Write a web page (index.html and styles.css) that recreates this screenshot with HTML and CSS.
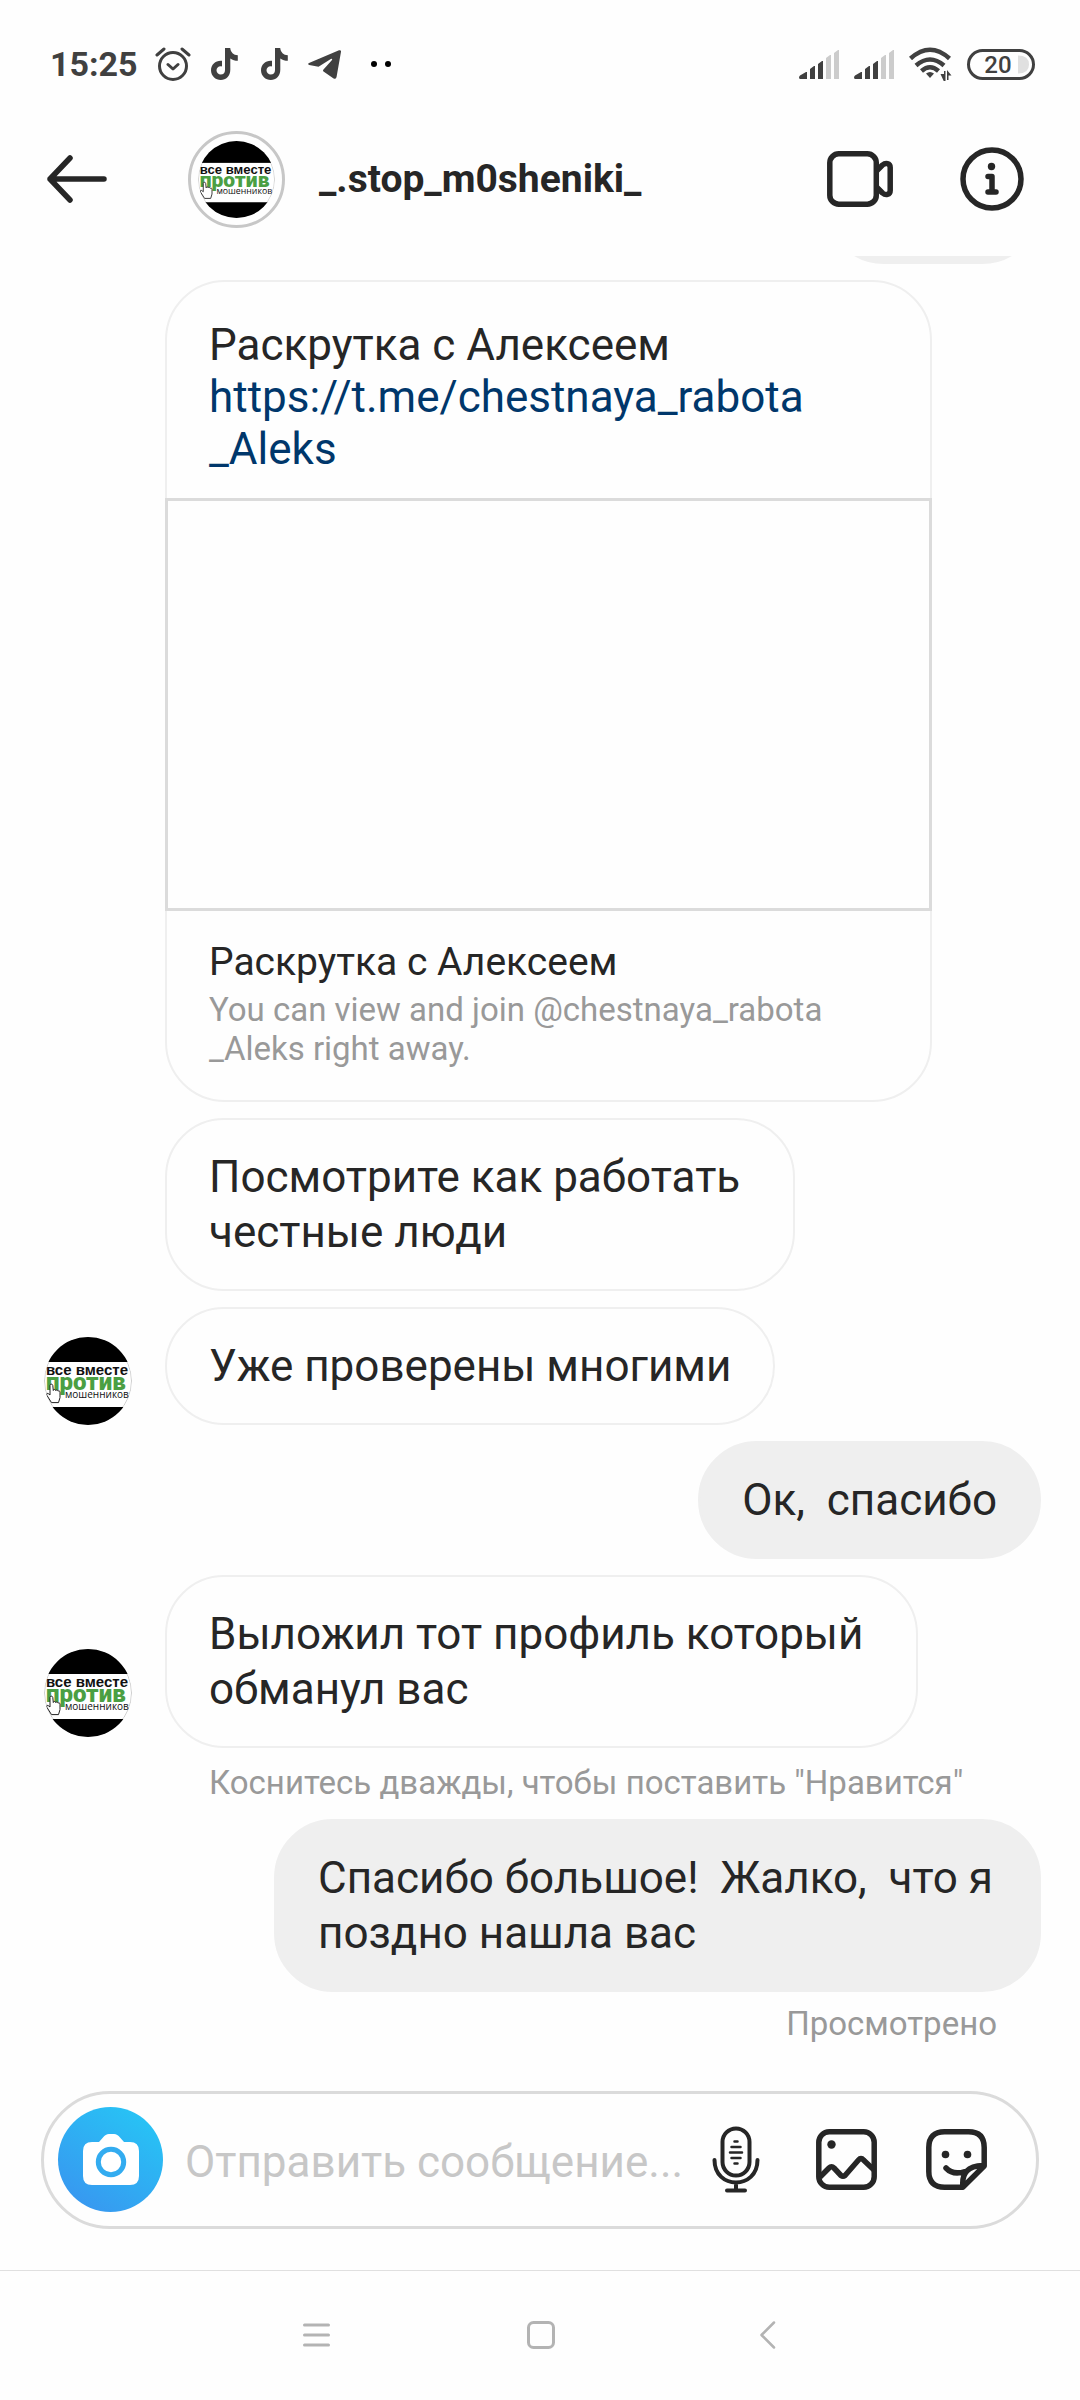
FILE: index.html
```html
<!DOCTYPE html>
<html lang="ru">
<head>
<meta charset="utf-8">
<meta name="viewport" content="width=device-width, initial-scale=1">
<title>_.stop_m0sheniki_</title>
<link rel="stylesheet" href="styles.css">
</head>
<body>
<svg class="sprite" aria-hidden="true">
  <defs>
    <clipPath id="round"><circle cx="44" cy="44" r="44"/></clipPath>
    <symbol id="avatar" viewBox="0 0 88 88">
      <g clip-path="url(#round)">
        <rect width="88" height="88" fill="#fff"/>
        <rect width="88" height="25" fill="#000"/>
        <rect y="70" width="88" height="18" fill="#000"/>
        <circle cx="44" cy="44" r="43.500" fill="none" stroke="#000" stroke-opacity=".2"/>
        <text class="logo-top" x="2" y="38">все вместе</text>
        <text class="logo-mid" x="2" y="53">против</text>
        <text class="logo-low" x="21" y="61">мошенников</text>
        <path d="M6 48.500c0-1.800 2.600-1.800 2.800 0l.5 5c.2-1.500 2.200-1.300 2.400.1.300-1 2.100-.8 2.300.6.500-.8 2-.4 2 .9v5.500l-1.500 5H7.500L3 58.500c-1-2 .6-2.800 1.800-1.500L6 58z" fill="#fff" stroke="#222" stroke-width="1"/>
      </g>
    </symbol>
    <symbol id="tiktok" viewBox="0 0 27 32">
      <path d="M14 0h5.200c.5 4.300 3.300 7 7.600 7.300v5.500c-2.800 0-5.300-.8-7.500-2.300v11.200C19.300 28 15 32 9.800 32 4.500 32 0 28 0 22.300c0-6 5-10.200 11-9.500v5.600c-3-.8-5.500 1.100-5.500 3.900 0 2.500 2 4.300 4.200 4.300 2.600 0 4.300-1.900 4.300-4.700z" fill="#404040"/>
    </symbol>
    <symbol id="signal" viewBox="0 0 40 29">
      <path d="M0 27l1-1.500L7 22h1v7H1q-1 0-1-2zM11 19l4-3h1v13h-5zM19 14l4-3h1v18h-5z" fill="#404040"/>
      <path d="M27 8l4-3h1v24h-5zM35 3l4-3h1v29h-5z" fill="#ccc"/>
    </symbol>
  </defs>
</svg>
<div class="app">
  <div class="status">
    <div class="status-group">
      <span class="clock">15:25</span>
      <svg class="alarm" width="36" height="34" viewBox="0 0 36 34" fill="none" stroke="#404040" stroke-width="3" stroke-linecap="round" stroke-linejoin="round"><circle cx="18" cy="19" r="13.500"/><path d="M13 17.500l5 4.500 5-4.500M2 8l7-6M34 8l-7-6"/></svg>
      <svg width="27" height="32"><use href="#tiktok"/></svg>
      <svg width="27" height="32"><use href="#tiktok"/></svg>
      <svg class="telegram" width="33" height="29" viewBox="0 0 33 29"><path d="M1 13L31 .3q2.200-.7 2 1.500l-4.400 25q-.5 3-3 1.600L15.500 21.600q-1-1 0-2L24 10q.7-1.800-1.200-.9L10.500 16.700 1.200 15q-2-.9-.2-2z" fill="#404040"/></svg>
      <svg class="dots" width="20" height="6" viewBox="0 0 20 6"><circle cx="3" cy="3" r="3"/><circle cx="17" cy="3" r="3"/></svg>
    </div>
    <div class="status-group status-right">
      <svg width="40" height="29"><use href="#signal"/></svg>
      <svg width="40" height="29"><use href="#signal"/></svg>
      <svg class="wifi" width="43" height="34" viewBox="0 0 43 34" fill="none" stroke="#404040" stroke-width="4.500"><path d="M1.500 11.500Q21 -6 40.500 11.500M7 18.500q14-12 28 0M12.500 24q8.500-7.500 17 0"/><path d="M17 26.500q4-3 8 0L21 31z" fill="#404040" stroke="none"/><path d="M31.500 27h3.500v-3h1.500v10h-1.800zM38 23l4.500 5.500h-3V33H38z" fill="#404040" stroke="none"/></svg>
      <svg width="68" height="31" viewBox="0 0 68 31"><rect x="1.500" y="1.500" width="65" height="28" rx="14" fill="none" stroke="#404040" stroke-width="3"/><path d="M51 6.500q11 0 11 9t-11 9z" fill="#e0e0e0"/><text class="battery-level" x="31" y="24" text-anchor="middle">20</text></svg>
    </div>
  </div>

  <header class="header">
    <button class="icon-btn back" aria-label="Назад"><svg width="62" height="50" viewBox="0 0 62 50" fill="none" stroke="#262626" stroke-width="5.500" stroke-linecap="round" stroke-linejoin="round"><path d="M59 25H5M25 4L5 25l20 21"/></svg></button>
    <a class="profile" href="#">
      <span class="ring"><svg width="77" height="77"><use href="#avatar"/></svg></span>
      <span class="name">_.stop_m0sheniki_</span>
    </a>
    <button class="icon-btn" aria-label="Видеозвонок"><svg width="66" height="56" viewBox="0 0 66 56" fill="none" stroke="#262626" stroke-width="5.500" stroke-linejoin="round"><rect x="2.800" y="2.800" width="46.500" height="50.400" rx="9"/><path d="M49.500 20l6-6c3-2.500 7.700-2 7.700 2.500v23c0 4.500-4.700 5-7.700 2.500l-6-6"/></svg></button>
    <button class="icon-btn info" aria-label="Сведения"><svg width="64" height="64" viewBox="0 0 64 64" fill="none" stroke="#262626" stroke-width="5.500" stroke-linecap="round" stroke-linejoin="round"><circle cx="32" cy="32" r="29"/><path d="M28 29.500h4V45M28 45h8"/><circle cx="31.500" cy="19.500" r="3.700" fill="#262626" stroke="none"/></svg></button>
  </header>

  <main class="chat">
    <div class="bubble out stub" aria-hidden="true"></div>

    <article class="card">
      <p class="card-text">Раскрутка с Алексеем<br><a href="#">https://t.me/chestnaya_rabota<br>_Aleks</a></p>
      <div class="preview"></div>
      <div class="card-info">
        <h2>Раскрутка с Алексеем</h2>
        <p>You can view and join @chestnaya_rabota<br>_Aleks right away.</p>
      </div>
    </article>

    <p class="bubble in">Посмотрите как работать 
честные люди</p>

    <div class="row">
      <svg width="88" height="88"><use href="#avatar"/></svg>
      <p class="bubble">Уже проверены многими</p>
    </div>

    <p class="bubble out">Ок,  спасибо</p>

    <div class="row">
      <svg class="raised" width="88" height="88"><use href="#avatar"/></svg>
      <p class="bubble">Выложил тот профиль который 
обманул вас</p>
    </div>
    <p class="note hint">Коснитесь дважды, чтобы поставить "Нравится"</p>

    <p class="bubble out">Спасибо большое!  Жалко,  что я 
поздно нашла вас</p>
    <p class="note seen">Просмотрено</p>
  </main>

  <form class="composer">
    <button type="button" class="camera" aria-label="Камера"><svg width="56" height="52" viewBox="0 0 56 52"><path d="M9 8h7l4-4.500Q22.500 0 26 0h5q3.500 0 6 3.500L41 8h6q9 0 9 9v25q0 9-9 9H9q-9 0-9-9V17q0-9 9-9z" fill="#fff"/><circle cx="28" cy="28" r="12.700" fill="#fff" stroke="#33acf0" stroke-width="5"/></svg></button>
    <input type="text" aria-label="Сообщение" placeholder="Отправить сообщение...">
    <button type="button" class="icon-btn mic" aria-label="Голосовое сообщение"><svg width="48" height="67" viewBox="0 0 48 67" fill="none" stroke="#262626" stroke-width="4" stroke-linecap="round"><rect x="10.500" y="2.500" width="27" height="47" rx="13.500"/><path d="M2.500 34C2.500 64 45.500 64 45.500 34M24 57v7M15 64.500h18"/><path d="M22.500 15.500h3M19.500 21h9M18 26.500h12M19.500 32h9M22.500 37.500h3" stroke-width="2.500"/></svg></button>
    <button type="button" class="icon-btn gallery" aria-label="Галерея"><svg width="61" height="61" viewBox="0 0 61 61" fill="none" stroke="#262626" stroke-width="5.500" stroke-linejoin="round"><rect x="2.800" y="2.800" width="55.400" height="55.400" rx="10.500"/><path d="M4 48l9-9q2.500-2.500 5 0l7 7.500q2 1.500 4 0L42.500 31q2.500-3 5 0L58 41"/><circle cx="15.500" cy="15.500" r="4.200" fill="#262626" stroke="none"/></svg></button>
    <button type="button" class="icon-btn sticker" aria-label="Стикеры"><svg width="61" height="61" viewBox="0 0 61 61" fill="none" stroke="#262626" stroke-width="5.500" stroke-linejoin="round" stroke-linecap="round"><path d="M36 58.200H18.500q-15.700 0-15.700-15.700v-24q0-15.700 15.700-15.700h24q15.700 0 15.700 15.700V37L37 58q-2.500-21 20-21.500M20 39q7 7.500 19 3.500"/><circle cx="19.500" cy="25.500" r="3.800" fill="#262626" stroke="none"/><circle cx="41.500" cy="25.500" r="3.800" fill="#262626" stroke="none"/></svg></button>
  </form>

  <nav class="sysnav">
    <button class="icon-btn" aria-label="Недавние"><svg width="27" height="24" viewBox="0 0 27 24" stroke="#b3b3b3" stroke-width="3" stroke-linecap="round"><path d="M1.500 2h24M1.500 12h24M1.500 22h24"/></svg></button>
    <button class="icon-btn" aria-label="Домой"><svg width="28" height="28" viewBox="0 0 28 28" fill="none" stroke="#b3b3b3" stroke-width="3"><rect x="1.500" y="1.500" width="25" height="25" rx="5"/></svg></button>
    <button class="icon-btn" aria-label="Назад"><svg width="27" height="28" viewBox="-8 0 27 28" fill="none" stroke="#b3b3b3" stroke-width="2.500" stroke-linecap="round" stroke-linejoin="round"><path d="M14 1.500L1.500 14 14 26.500"/></svg></button>
  </nav>
</div>
</body>
</html>
```
FILE: styles.css
```css
* {
  box-sizing: border-box;
}

body {
  margin: 0;
  background: #fefefe;
  color: #262626;
  font-family: Roboto, "Noto Sans", sans-serif;
  font-size: 44px;
}

p,
h2 {
  margin: 0;
}

a {
  color: inherit;
  text-decoration: none;
}

svg {
  display: block;
  flex: none;
}

.sprite {
  position: absolute;
  width: 0;
  height: 0;
}

.app {
  display: flex;
  flex-direction: column;
  height: 100vh;
}

.icon-btn {
  display: flex;
  padding: 0;
  border: 0;
  background: none;
}

/* Status bar */
.status {
  display: flex;
  justify-content: space-between;
  padding: 44px 45px 0 50px;
  color: #404040;
}

.status-group {
  display: flex;
  align-items: center;
  gap: 23px;
  height: 40px;
}

.clock {
  margin-right: -6px;
  font-size: 34px;
  font-weight: 700;
  line-height: 40px;
}

.telegram {
  margin-left: -3px;
}

.alarm {
  margin-right: -3px;
}

.dots {
  margin-left: 7px;
}

.status-right {
  gap: 15px;
}

.battery-level {
  font-size: 24px;
  font-weight: 500;
  fill: #404040;
}

.logo-top {
  font: 700 15px "Liberation Sans", sans-serif;
  fill: #111;
}

.logo-mid {
  font: 900 24px Roboto, sans-serif;
  fill: #4b9f43;
}

.logo-low {
  font: 400 10px "Open Sans", sans-serif;
  fill: #111;
}

/* Conversation header */
.header {
  display: flex;
  align-items: center;
  gap: 67px;
  height: 172px;
  padding: 35px 56px 17px 45px;
}

.profile {
  display: flex;
  flex: 1;
  align-items: center;
  gap: 34px;
  margin-left: 14px;
}

.ring {
  display: flex;
  padding: 7px;
  border: 3px solid #c7c7c7;
  border-radius: 50%;
}

.name {
  font-size: 39px;
  font-weight: 700;
  line-height: 46px;
}

/* Messages */
.chat {
  display: flex;
  flex: 1;
  flex-direction: column;
  gap: 16px;
  justify-content: flex-end;
  min-height: 0;
  overflow: hidden;
  padding: 0 39px 48px 44px;
}

.chat > * {
  flex: none;
}

.row {
  display: flex;
  align-items: flex-end;
  gap: 33px;
}

.raised {
  margin-bottom: 11px;
}

.bubble {
  width: fit-content;
  max-width: 767px;
  padding: 30px 42px 29px;
  border: 2px solid #efefef;
  border-radius: 59px;
  line-height: 55px;
  white-space: pre;
}

.in,
.card {
  margin-left: 121px;
}

.out {
  align-self: flex-end;
  background: #efefef;
}

.stub {
  width: 216px;
  height: 118px;
}

.card {
  max-width: 767px;
  border: 2px solid #efefef;
  border-radius: 60px;
}

.card-text {
  padding: 37px 42px 23px;
  line-height: 52px;
}

.card-text a {
  color: #00376b;
}

.preview {
  height: 413px;
  margin: 0 -2px;
  border: 3px solid #dbdbdb;
}

.card-info {
  padding: 28px 42px 32px;
}

.card-info h2 {
  margin-bottom: 5px;
  font-size: 39px;
  font-weight: 400;
  line-height: 46px;
}

.card-info p,
.note {
  color: #999;
  font-size: 33px;
  line-height: 39px;
}

.hint {
  margin: -1px 0 1px 165px;
}

.seen {
  align-self: flex-end;
  margin: -4px 44px 0 0;
}

/* Composer */
.composer {
  display: flex;
  align-items: center;
  height: 138px;
  margin: 0 41px;
  padding: 0 49px 1px 14px;
  border: 3px solid #dbdbdb;
  border-radius: 69px;
}

.camera {
  display: flex;
  align-items: center;
  justify-content: center;
  flex: none;
  width: 105px;
  height: 105px;
  padding: 0;
  border: 0;
  border-radius: 50%;
  background: linear-gradient(35deg, #3897f0 10%, #27c4f5 90%);
}

.composer input {
  flex: 1;
  min-width: 0;
  height: 60px;
  margin-left: 22px;
  padding: 4px 0 0;
  border: 0;
  outline: 0;
  background: none;
  color: inherit;
  font: inherit;
}

.composer input::placeholder {
  color: #c7c7c7;
  opacity: 1;
}

.gallery {
  margin-left: 56px;
}

.sticker {
  margin-left: 49px;
}

/* System navigation */
.sysnav {
  display: flex;
  align-items: center;
  justify-content: center;
  gap: 197px;
  height: 130px;
  margin-top: 41px;
  padding: 0 0 2px 2px;
  border-top: 1px solid #e0e0e0;
}
```
